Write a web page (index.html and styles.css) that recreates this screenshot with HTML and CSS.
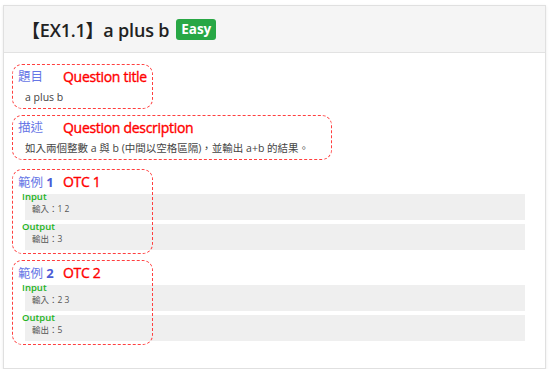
FILE: index.html
```html
<!DOCTYPE html>
<html lang="zh-Hant">
<head>
<meta charset="utf-8">
<title>EX1.1 a plus b</title>
<link rel="stylesheet" href="styles.css">
</head>
<body>
<div class="card">
  <div class="card-header">
    <h1 class="title">【EX1.1】a plus b <span class="badge">Easy</span></h1>
  </div>
  <div class="card-body">
    <section class="section sec-title">
      <div class="note note-narrow"></div>
      <div class="label-row"><span class="label">題目</span><span class="anno">Question title</span></div>
      <div class="text">a plus b</div>
    </section>
    <section class="section sec-desc">
      <div class="note note-wide"></div>
      <div class="label-row"><span class="label">描述</span><span class="anno">Question description</span></div>
      <div class="text">如入兩個整數 a 與 b (中間以空格區隔)，並輸出 a+b 的結果。</div>
    </section>
    <section class="section example ex1">
      <div class="note note-narrow"></div>
      <div class="label-row"><span class="label">範例 <b>1</b></span><span class="anno">OTC 1</span></div>
      <div class="io-label">Input</div>
      <pre class="io">輸入：1 2</pre>
      <div class="io-label">Output</div>
      <pre class="io">輸出：3</pre>
    </section>
    <section class="section example ex2">
      <div class="note note-narrow"></div>
      <div class="label-row"><span class="label">範例 <b>2</b></span><span class="anno">OTC 2</span></div>
      <div class="io-label">Input</div>
      <pre class="io">輸入：2 3</pre>
      <div class="io-label">Output</div>
      <pre class="io">輸出：5</pre>
    </section>
  </div>
</div>
</body>
</html>
```
FILE: styles.css
```css
* { box-sizing: border-box; }
html, body { margin: 0; padding: 0; background: #fff; }
body {
  font-family: "Open Sans", "Noto Sans CJK TC", sans-serif;
  color: #333;
  padding: 5px 4px 0 3px;
}
.card {
  width: 543px;
  height: 364px;
  border: 1px solid #e0e0e0;
  box-shadow: 0 1px 3px rgba(0,0,0,0.09);
  background: #fff;
}
.card-header {
  height: 47px;
  background: #f5f5f5;
  border-bottom: 1px solid #e2e2e2;
  padding-left: 18px;
  display: flex;
  align-items: center;
}
.title {
  margin: 0;
  font-size: 18px;
  font-weight: 600;
  color: #222;
  display: flex;
  align-items: center;
  gap: 6px;
  letter-spacing: -0.2px;
}
.badge {
  display: inline-block;
  background: #28a745;
  color: #fff;
  font-size: 13.5px;
  font-weight: 700;
  line-height: 21px;
  height: 21px;
  padding: 0 5px;
  border-radius: 3px;
  margin-left: 1px;
  letter-spacing: 0;
}
.card-body {
  padding: 16px 20px 0 14px;
}
.section { position: relative; }
.sec-desc { margin-top: 16px; }
.ex1 { margin-top: 19px; }
.ex2 { margin-top: 15px; }
.note {
  position: absolute;
  left: -6px;
  top: -5px;
  bottom: -5px;
  border: 1.6px dashed #ff3f3f;
  border-radius: 10px;
  pointer-events: none;
}
.note-narrow { width: 141px; }
.note-wide { width: 320px; }
.example .note { bottom: -4px; }
.label-row {
  display: flex;
  align-items: center;
  height: 16px;
}
.label {
  font-size: 12.5px;
  color: #6676e6;
  width: 45px;
  line-height: 16px;
  white-space: nowrap;
}
.label b { color: #4b5bd6; font-weight: 700; font-size: 13px; }
.anno {
  color: #ff0000;
  font-size: 14px;
  font-weight: 400;
  -webkit-text-stroke: 0.35px #ff0000;
  line-height: 16px;
  white-space: nowrap;
  letter-spacing: -0.3px;
}
.text {
  margin-top: 5px;
  margin-left: 7px;
  font-size: 10.5px;
  line-height: 14px;
  color: #444;
  white-space: nowrap;
}
.io-label {
  position: relative;
  z-index: 1;
  margin: 2px 0 -8px 4px;
  font-size: 9.5px;
  font-weight: 600;
  line-height: 10px;
  height: 10px;
  color: #22b422;
}
.io {
  margin: 0 0 0 7px;
  height: 26px;
  background: #efefef;
  padding: 9px 0 0 7px;
  font-family: "Open Sans", "Noto Sans CJK TC", sans-serif;
  font-size: 8.5px;
  line-height: 12px;
  color: #555;
}
```
